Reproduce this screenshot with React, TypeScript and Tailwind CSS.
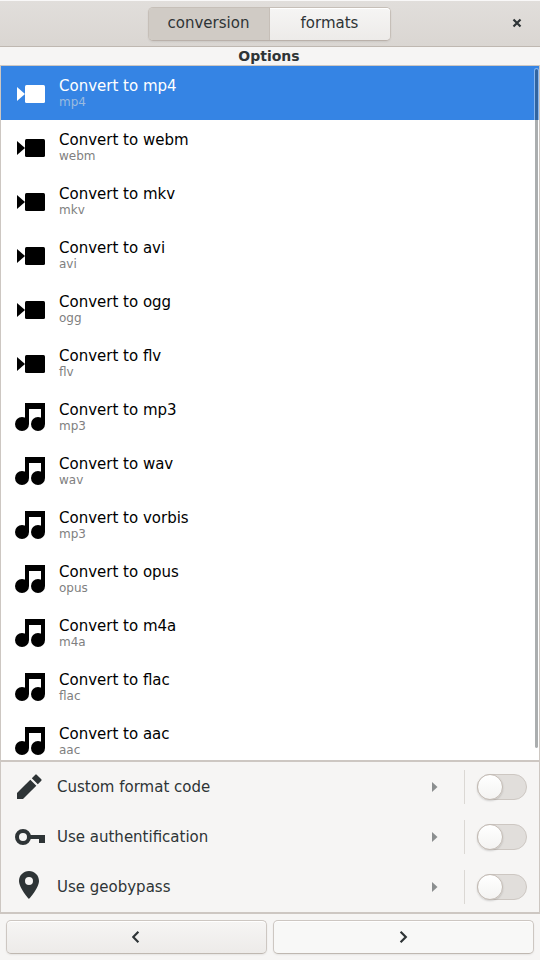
import { useState } from "react";

type Kind = "video" | "audio";

const formats: { name: string; ext: string; kind: Kind }[] = [
  { name: "Convert to mp4", ext: "mp4", kind: "video" },
  { name: "Convert to webm", ext: "webm", kind: "video" },
  { name: "Convert to mkv", ext: "mkv", kind: "video" },
  { name: "Convert to avi", ext: "avi", kind: "video" },
  { name: "Convert to ogg", ext: "ogg", kind: "video" },
  { name: "Convert to flv", ext: "flv", kind: "video" },
  { name: "Convert to mp3", ext: "mp3", kind: "audio" },
  { name: "Convert to wav", ext: "wav", kind: "audio" },
  { name: "Convert to vorbis", ext: "mp3", kind: "audio" },
  { name: "Convert to opus", ext: "opus", kind: "audio" },
  { name: "Convert to m4a", ext: "m4a", kind: "audio" },
  { name: "Convert to flac", ext: "flac", kind: "audio" },
  { name: "Convert to aac", ext: "aac", kind: "audio" },
];

function VideoIcon() {
  return (
    <svg viewBox="0 0 32 32" className="size-8 shrink-0" fill="currentColor" aria-hidden="true">
      <path d="M3 10L11 17L3 24Z" />
      <rect x="11" y="8" width="20" height="18" rx="1.5" />
    </svg>
  );
}

function MusicIcon() {
  return (
    <svg viewBox="0 0 32 32" className="size-8 shrink-0" fill="currentColor" aria-hidden="true">
      <path d="M11 2H31V23H27V8H15V23H11Z" />
      <circle cx="8" cy="23" r="7" />
      <circle cx="24" cy="23" r="7" />
    </svg>
  );
}

function PencilIcon() {
  return (
    <svg viewBox="0 0 32 32" className="size-8 shrink-0" fill="currentColor" aria-hidden="true">
      <path d="M3 22L16.3 8.7L22.3 14.7L9 28H3Z" />
      <path d="M17.8 7.2L21.3 3.7Q22 3 22.7 3.7L27.3 8.3Q28 9 27.3 9.7L23.8 13.2Z" />
    </svg>
  );
}

function KeyIcon() {
  return (
    <svg viewBox="0 0 32 32" className="size-8 shrink-0" fill="currentColor" aria-hidden="true">
      <circle cx="9" cy="16" r="6" fill="none" stroke="currentColor" strokeWidth="4" />
      <path d="M16 14H31V22H25V18H16Z" />
    </svg>
  );
}

function PinIcon() {
  return (
    <svg viewBox="0 0 32 32" className="size-8 shrink-0" fill="currentColor" aria-hidden="true">
      <path
        fillRule="evenodd"
        d="M15 0C9.4 0 5 4.4 5 10C5 17 15 28 15 28C15 28 25 17 25 10C25 4.4 20.6 0 15 0ZM15 6A4 4 0 1 1 15 14A4 4 0 1 1 15 6Z"
      />
    </svg>
  );
}

const settings = [
  { id: "custom", label: "Custom format code", Icon: PencilIcon },
  { id: "auth", label: "Use authentification", Icon: KeyIcon },
  { id: "geo", label: "Use geobypass", Icon: PinIcon },
];

function SettingRow({ id, label, Icon }: (typeof settings)[number]) {
  return (
    <div className="flex h-[50px] items-center pr-3">
      <button type="button" className="flex h-full flex-1 items-center pr-[26px] pl-[13px] text-left">
        <Icon />
        <span id={id + "-label"} className="ml-[11px] flex-1">
          {label}
        </span>
        <svg viewBox="0 0 6 10" className="h-2.5 w-1.5 text-[#8b8e8f]" fill="currentColor" aria-hidden="true">
          <path d="M0 0L5.5 5L0 10Z" />
        </svg>
      </button>
      <div className="h-[34px] w-px bg-[#dbd8d4]" />
      <input
        type="checkbox"
        role="switch"
        aria-labelledby={id + "-label"}
        className="ml-3 h-[26px] w-[50px] appearance-none rounded-full border border-[#cdc7c2] bg-[#e1dedb] before:-mt-px before:-ml-px before:block before:size-[26px] before:rounded-full before:border before:border-[#c3bbb4] before:bg-linear-to-b before:from-white before:to-[#f4f3f2] before:shadow-[0_1px_2px_rgba(0,0,0,0.16)] checked:bg-[#3584e4] checked:before:ml-[23px]"
      />
    </div>
  );
}

export default function App() {
  const [selected, setSelected] = useState(0);

  return (
    <div className="flex h-screen flex-col bg-[#f6f5f4] font-['DejaVu_Sans',sans-serif] text-[15px] leading-[18px] text-[#2e3436]">
      <header className="grid h-[47px] shrink-0 grid-cols-[1fr_auto_1fr] items-center border-t border-b border-t-[#f9f8f8] border-b-[#bfb8b1] bg-linear-to-b from-[#e1dedb] to-[#dad6d2] pr-2 pl-1.5">
        <div />
        <nav className="flex h-[34px] w-[243px] rounded-[5px] border border-[#c6bfb8] border-b-[#bab1aa] shadow-[0_1px_2px_rgba(0,0,0,0.07)]">
          <button type="button" aria-pressed="true" className="flex-1 rounded-l-[4px] border-r border-[#c6bfb8] bg-[#d0cbc5] pb-0.5">
            conversion
          </button>
          <button type="button" aria-pressed="false" className="w-[120px] rounded-r-[4px] bg-linear-to-b from-[#f6f5f4] to-[#edebe9] pb-0.5 shadow-[inset_0_1px_white]">
            formats
          </button>
        </nav>
        <button type="button" aria-label="Close" className="flex size-[30px] items-center justify-center justify-self-end pb-0.5">
          <svg viewBox="0 0 10 10" className="size-2.5" fill="none" stroke="currentColor" strokeWidth="2.2" aria-hidden="true">
            <path d="M1.5 1.5L8.5 8.5M8.5 1.5L1.5 8.5" />
          </svg>
        </button>
      </header>

      <h1 className="shrink-0 pr-0.5 text-center text-[14px] font-bold">Options</h1>

      <main className="flex min-h-0 flex-1 flex-col border border-b-2 border-[#cdc7c2]">
        <div className="relative min-h-0 flex-1 overflow-hidden bg-white">
          <ul>
            {formats.map((f, i) => (
              <li key={f.name}>
                <button
                  type="button"
                  onClick={() => setSelected(i)}
                  className={
                    i === selected
                      ? "flex h-[54px] w-full items-center bg-[#3584e4] pl-[13px] text-left text-white"
                      : "flex h-[54px] w-full items-center bg-white pl-[13px] text-left text-black"
                  }
                >
                  {f.kind === "video" ? <VideoIcon /> : <MusicIcon />}
                  <span className="ml-[13px] flex flex-col">
                    <span>{f.name}</span>
                    <span className={i === selected ? "text-[12px] leading-[14px] text-[#9abbe0]" : "text-[12px] leading-[14px] text-[#808080]"}>
                      {f.ext}
                    </span>
                  </span>
                </button>
              </li>
            ))}
          </ul>
          <div className="absolute top-0.5 right-0 bottom-[11px] w-[5px] rounded-full border border-white/40 bg-[#2e3436]/40 bg-clip-padding" />
        </div>
        <section className="shrink-0 border-t-2 border-[#cdc7c2]">
          {settings.map((s) => (
            <SettingRow key={s.id} {...s} />
          ))}
        </section>
      </main>

      <footer className="flex shrink-0 gap-1.5 p-1.5">
        <button
          type="button"
          aria-label="Previous"
          className="flex h-[34px] flex-1 items-center justify-center rounded-[5px] border border-[#cdc7c2] border-b-[#bfb8b1] bg-linear-to-b from-[#f6f5f4] to-[#edebe9] shadow-[inset_0_1px_white,0_1px_2px_rgba(0,0,0,0.07)]"
        >
          <svg viewBox="0 0 9 12" className="h-3 w-[9px]" fill="none" stroke="currentColor" strokeWidth="2.2" aria-hidden="true">
            <path d="M6.4 0.8L1.2 6L6.4 11.2" />
          </svg>
        </button>
        <button
          type="button"
          aria-label="Next"
          className="flex h-[34px] flex-1 items-center justify-center rounded-[5px] border border-[#cdc7c2] border-b-[#bfb8b1] bg-[#f8f8f7] shadow-[inset_0_1px_white,0_1px_2px_rgba(0,0,0,0.07)]"
        >
          <svg viewBox="0 0 9 12" className="h-3 w-[9px]" fill="none" stroke="currentColor" strokeWidth="2.2" aria-hidden="true">
            <path d="M1.6 0.8L6.8 6L1.6 11.2" />
          </svg>
        </button>
      </footer>
    </div>
  );
}
